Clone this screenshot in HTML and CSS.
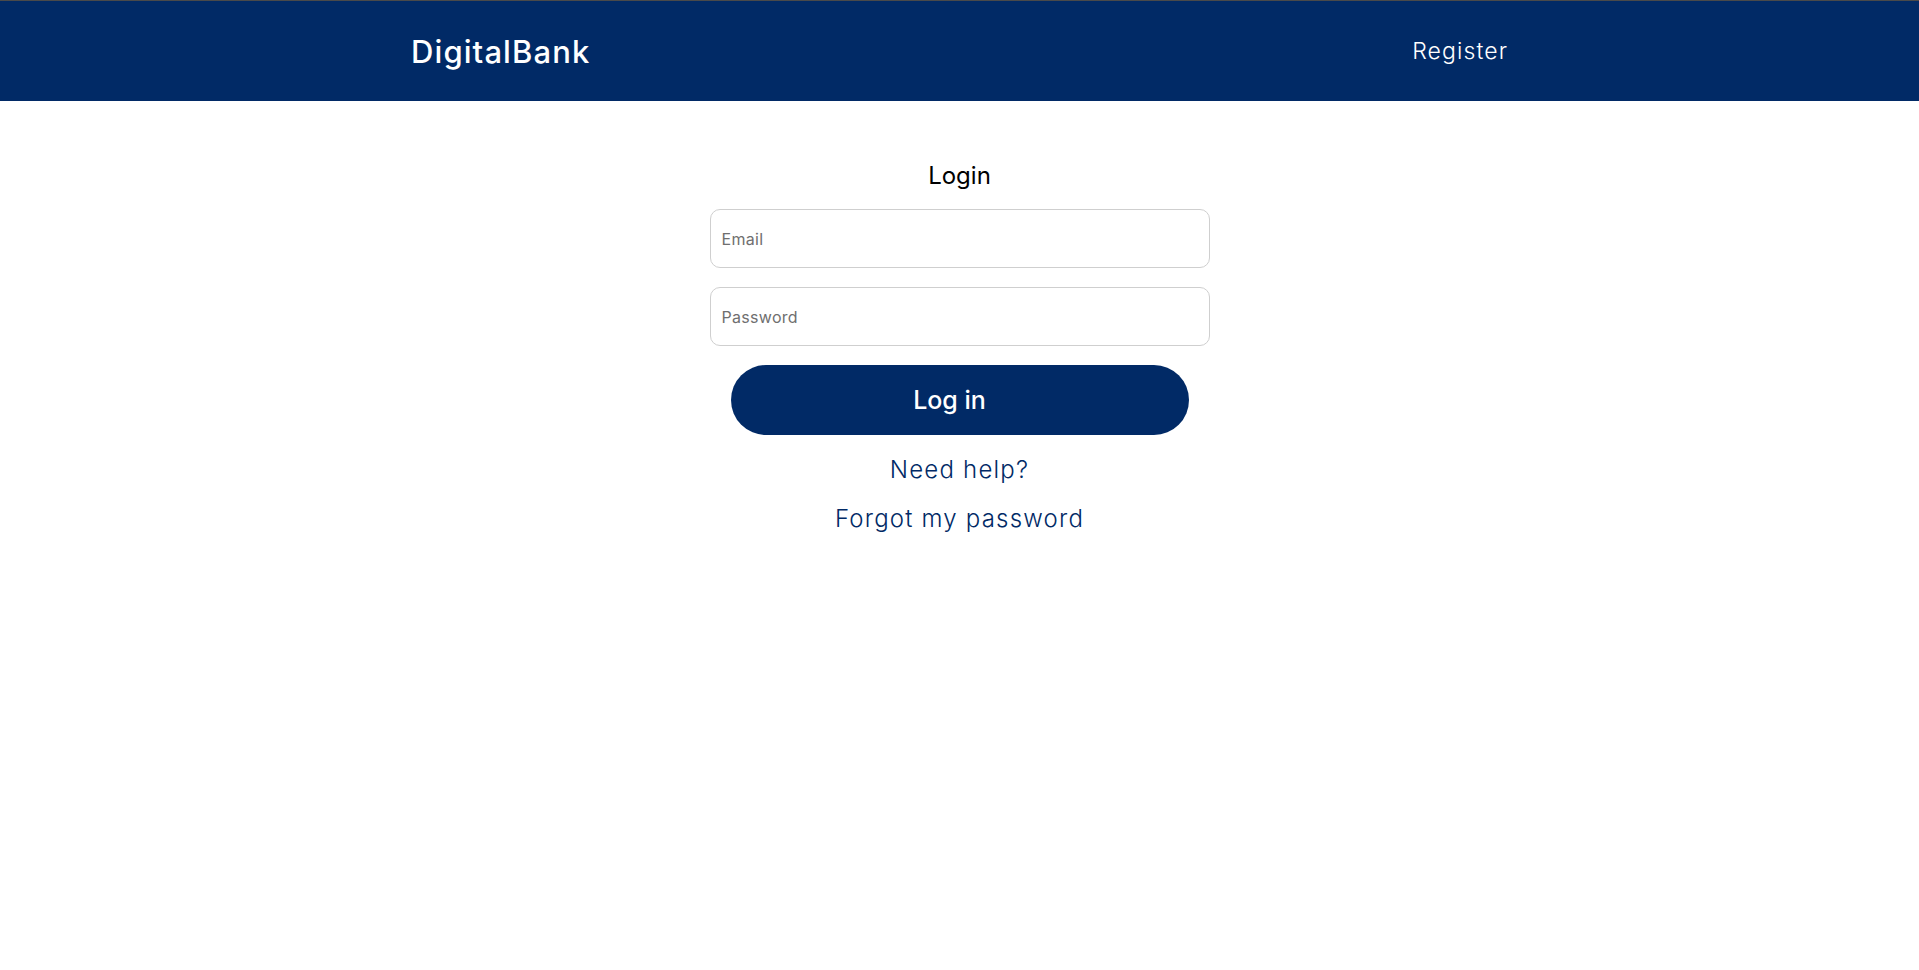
FILE: index.html
```html
<!DOCTYPE html>
<html lang="en">
<head>
<meta charset="utf-8">
<title>DigitalBank - Login</title>
<link rel="stylesheet" href="styles.css">
</head>
<body>
<header class="topbar">
  <div class="topbar-inner">
    <a class="brand" href="#">DigitalBank</a>
    <a class="nav-link" href="#">Register</a>
  </div>
</header>
<main class="login">
  <h2 class="login-title">Login</h2>
  <form class="login-form">
    <input class="field" type="email" placeholder="Email">
    <input class="field" type="password" placeholder="Password">
    <button class="btn-login" type="button">Log in</button>
  </form>
  <a class="help-link first" href="#">Need help?</a>
  <a class="help-link" href="#">Forgot my password</a>
</main>
</body>
</html>
```

FILE: styles.css
```css
* { box-sizing: border-box; }
html, body { margin: 0; padding: 0; background: #fff; }
body { font-family: "Inter", "Noto Sans", sans-serif; color: #000; }

.topbar {
  background: #012a66;
  border-top: 1px solid #4a4a4a;
  height: 101px;
}
.topbar-inner {
  width: 1097px;
  margin: 0 auto;
  height: 100%;
  display: flex;
  align-items: center;
  justify-content: space-between;
}
.brand {
  color: #fff;
  text-decoration: none;
  font-size: 31px;
  font-weight: 500;
  letter-spacing: 1.1px;
}
.nav-link {
  color: #fff;
  text-decoration: none;
  font-size: 23px;
  font-weight: 300;
  letter-spacing: 1.1px;
}

.login {
  display: flex;
  flex-direction: column;
  align-items: center;
  padding-top: 57px;
}
.login-title {
  margin: 0;
  font-size: 24px;
  line-height: 36px;
  font-weight: 400;
}
.login-form {
  width: 500px;
  margin-top: 15px;
  display: flex;
  flex-direction: column;
  align-items: center;
  gap: 19px;
}
.field {
  width: 100%;
  height: 59px;
  border: 1px solid #cfcfcf;
  border-radius: 10px;
  padding: 0 11px;
  font-family: inherit;
  font-size: 16px;
  letter-spacing: 0.3px;
  color: #333;
  outline: none;
}
.field::placeholder { color: #6f6f6f; }
.btn-login {
  width: 458px;
  height: 70px;
  margin-top: 0;
  padding: 0 20px 0 0;
  border: none;
  border-radius: 35px;
  background: #012a66;
  color: #fff;
  font-family: inherit;
  font-size: 25px;
  font-weight: 500;
  cursor: pointer;
}
.help-link {
  color: #012a66;
  text-decoration: none;
  font-size: 24px;
  line-height: 36px;
  font-weight: 300;
  letter-spacing: 1.2px;
  margin-top: 13px;
}
.help-link.first { margin-top: 17px; }
```
